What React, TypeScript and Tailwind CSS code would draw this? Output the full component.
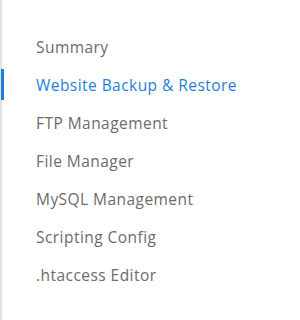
const items = [
  'Summary',
  'Website Backup & Restore',
  'FTP Management',
  'File Manager',
  'MySQL Management',
  'Scripting Config',
  '.htaccess Editor',
];

export default function App() {
  const active = 1;
  return (
    <div
      className="w-[300px] h-[320px] bg-white border-l-2 border-[#e2e2e2] pt-[32px]"
      style={{ fontFamily: '"Open Sans", "Liberation Sans", sans-serif' }}
    >
      <ul className="flex flex-col gap-[7px]">
        {items.map((label, i) => (
          <li
            key={label}
            className={`relative h-[31px] flex items-center pl-[34px] text-[15.5px] tracking-[0.45px] ${
              i === active ? 'text-[#1f7fd6]' : 'text-[#6b6b6b]'
            }`}
          >
            {i === active && <span className="absolute -left-[1px] -top-[1px] h-[31px] w-[3px] bg-[#1f7fd6]" />}
            {label}
          </li>
        ))}
      </ul>
    </div>
  );
}
